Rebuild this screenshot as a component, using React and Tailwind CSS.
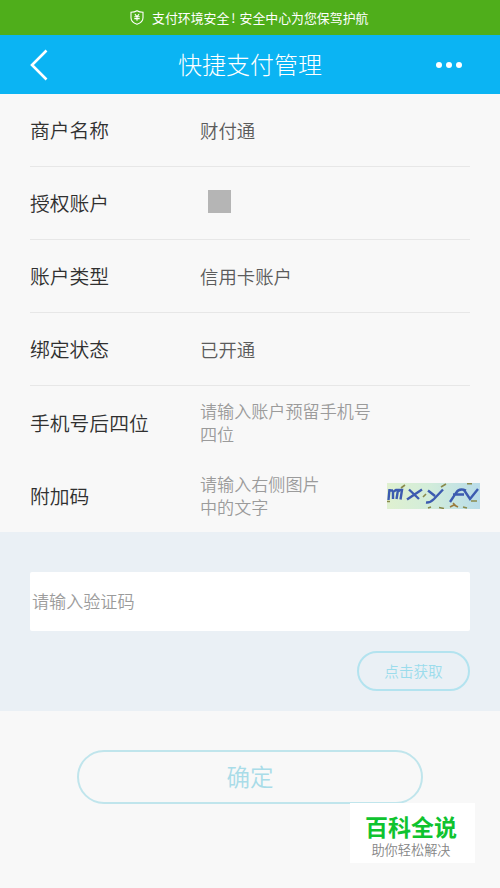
const INFO_ROWS = [
  { label: '商户名称', value: '财付通' },
  { label: '授权账户', masked: true },
  { label: '账户类型', value: '信用卡账户' },
  { label: '绑定状态', value: '已开通' },
]

function SafetyBanner() {
  return (
    <div className="flex h-[35px] items-center bg-[#4fae1b] pl-[130px] font-normal text-white">
      <svg className="mr-[8px] h-[15px] w-[14px]" viewBox="0 0 14 15" fill="none" stroke="currentColor">
        <path d="M7 .7C5.3 1.8 3.2 2.2 1 2.2v5.5c0 3.3 2.6 5.4 6 6.6 3.4-1.2 6-3.3 6-6.6V2.2C10.8 2.2 8.7 1.800 7 .7z" strokeWidth="1.100" />
        <path d="M4.900 4.200l2.100 2.400 2.100-2.400M4.300 6.700h5.400M4.300 8.600h5.400M7 6.600v4.100" strokeWidth="1.100" />
      </svg>
      <span className="text-[12.900px] leading-5 whitespace-nowrap">
        支付环境安全<span className="mr-[4px] ml-[2px]">!</span>安全中心为您保驾护航
      </span>
    </div>
  )
}

function TitleBar() {
  return (
    <header className="flex h-[59px] items-center justify-between bg-[#0bb4f3] pr-[38px] pl-[30px] text-white">
      <button type="button" aria-label="返回" className="w-[26px]">
        <svg className="h-[32px] w-[18px]" viewBox="0 0 18 32" fill="none" stroke="currentColor" strokeWidth="2.600">
          <path d="M16.500 1.500L2 16l14.500 14.500" />
        </svg>
      </button>
      <h1 className="ml-[8px] pb-px text-[24px] leading-8 font-light">快捷支付管理</h1>
      <button type="button" aria-label="更多" className="flex gap-[4px]">
        <span className="size-[6px] rounded-full bg-white" />
        <span className="size-[6px] rounded-full bg-white" />
        <span className="size-[6px] rounded-full bg-white" />
      </button>
    </header>
  )
}

function Captcha() {
  return (
    <svg className="mt-px h-[26px] w-[93px] shrink-0" viewBox="0 0 93 26">
      <defs>
        <linearGradient id="captcha-bg" x1="0" y1="0" x2="1" y2="0">
          <stop offset="0" stopColor="#dff0d0" />
          <stop offset=".45" stopColor="#d3edda" />
          <stop offset="1" stopColor="#b9dce9" />
        </linearGradient>
      </defs>
      <rect width="93" height="26" fill="url(#captcha-bg)" />
      {/* noise strokes */}
      <g fill="none" stroke="#8a8a4c" strokeWidth="1.600">
        <path d="M14 5l4-3M54 4l5-3M36 14l3-3M0 18.500h3M52 24.500l5 1M76 24l4 1M84 18h6M80 .8h5M41 25l3-1" />
        <path d="M63 24l4-2 4 2M66 20l3 3" stroke="#9b7a3d" />
      </g>
      {/* m x y f v */}
      <g fill="none" stroke="#3c5bb0" strokeWidth="2.400">
        <path d="M1.500 17L2.500 6M6 16V7.500M2.500 7.500h3.500M6 9l3-2h2L9.500 16M10.500 9l2.500-2h2L13.500 16.500" />
        <path d="M22 6.500l10 9.500M35 6.500L20 16.500" />
        <path d="M41 7.500l7 5.500M56 6.500L47 16q-4 4-8 3.500" />
        <path d="M79 7.500q-7-3-10 2.500l-6 9M66 11.500h11" />
        <path d="M77 7l6 9 8-10" />
      </g>
    </svg>
  )
}

function InputRow({ label, placeholder, children }) {
  return (
    <div className="flex h-[73px] items-center pb-px">
      <label className="w-[170px] shrink-0 pt-px text-[19.800px] leading-7 text-[#303030]">{label}</label>
      <p className="flex-1 text-[17.100px] leading-[23px] whitespace-pre-line text-[#9b9b9b]">{placeholder}</p>
      {children}
    </div>
  )
}

export default function App() {
  return (
    <div className="h-[888px] w-[500px] overflow-hidden bg-[#f8f8f8] font-['Noto_Sans_CJK_SC',sans-serif] font-[350]">
      <SafetyBanner />
      <TitleBar />

      <section className="h-[438px] pr-[20px] pl-[30px]">
        {INFO_ROWS.map((row) => (
          <div key={row.label} className="mr-[10px] flex h-[73px] items-center border-b border-[#e7e7e7]">
            <span className="w-[170px] text-[19.800px] leading-7 text-[#303030]">{row.label}</span>
            {row.masked ? (
              <span className="mb-[4px] ml-[8px] size-[23px] bg-[#b5b5b5]" />
            ) : (
              <span className="text-[18.400px] leading-7 text-[#5b5b5b]">{row.value}</span>
            )}
          </div>
        ))}
        <InputRow label="手机号后四位" placeholder={'请输入账户预留手机号\n四位'} />
        <InputRow label="附加码" placeholder={'请输入右侧图片\n中的文字'}>
          <Captcha />
        </InputRow>
      </section>

      <section className="flex h-[179px] flex-col items-end bg-[#eaf0f5] px-[30px] pt-[40px]">
        <div className="flex h-[59px] w-full items-center rounded-[2px] bg-white pb-[2px] pl-[2px] text-[17.100px] text-[#9b9b9b]">
          请输入验证码
        </div>
        <button type="button" className="mt-[20px] h-[40px] w-[113px] rounded-full border-2 border-[#b3e3ef] text-[14.600px] text-[#9bdcec]">
          点击获取
        </button>
      </section>

      <button type="button" className="mt-[39px] ml-[77px] block h-[54px] w-[346px] rounded-full border-2 border-[#c0e5ec] pb-px text-[23.500px] text-[#a9dce8]">
        确定
      </button>

      <footer className="relative -mt-px ml-[350px] h-[60px] w-[125px] bg-white pt-[8px] pr-[3px] text-center">
        <p className="text-[23px] leading-[31px] font-bold text-[#0fc32f]">百科全说</p>
        <p className="text-[13.200px] leading-[15px] text-[#858585]">助你轻松解决</p>
      </footer>
    </div>
  )
}
